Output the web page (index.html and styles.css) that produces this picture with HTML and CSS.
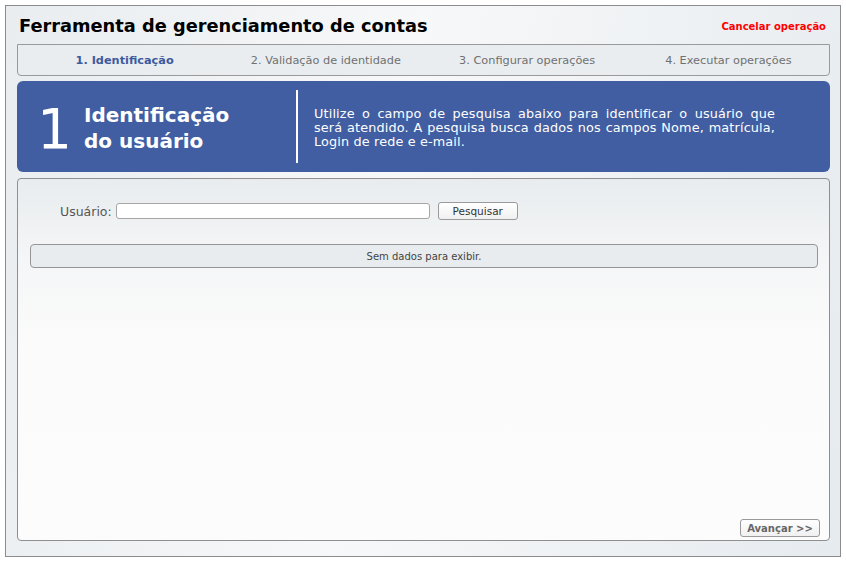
FILE: index.html
```html
<!DOCTYPE html>
<html lang="pt">
<head>
  <meta charset="UTF-8" />
  <title>Ferramenta de gerenciamento de contas</title>
  <link rel="stylesheet" href="styles.css">
</head>
<body>
  <div class="frame">
    <div class="header">
      <h1 class="title">Ferramenta de gerenciamento de contas</h1>
      <a class="cancel" href="#">Cancelar operação</a>
    </div>

    <div class="steps">
      <div class="step active">1. Identificação</div>
      <div class="step">2. Validação de identidade</div>
      <div class="step">3. Configurar operações</div>
      <div class="step">4. Executar operações</div>
    </div>

    <div class="banner">
      <div class="banner-num">1</div>
      <div class="banner-title">Identificação<br>do usuário</div>
      <div class="banner-sep"></div>
      <div class="banner-text">
        <span class="line">Utilize o campo de pesquisa abaixo para identificar o usuário que</span>
        <span class="line">será atendido. A pesquisa busca dados nos campos Nome, matrícula,</span>
        <span class="line last">Login de rede e e-mail.</span>
      </div>
    </div>

    <div class="panel">
      <div class="search">
        <label class="search-label" for="usuario">Usuário:</label>
        <input class="search-input" id="usuario" type="text">
        <button class="btn">Pesquisar</button>
      </div>
      <div class="empty">Sem dados para exibir.</div>
      <div class="panel-foot">
        <button class="btn btn-next">Avançar &gt;&gt;</button>
      </div>
    </div>
  </div>
</body>
</html>
```

FILE: styles.css
```css
html, body {
  margin: 0;
  background: #fff;
}

body {
  padding: 5px 6px 6px 5px;
  font-family: 'DejaVu Sans', Verdana, sans-serif;
}

.frame {
  box-sizing: border-box;
  width: 836px;
  height: 552px;
  border: 1px solid #8c8c8c;
  padding: 0 10px 15px 11px;
  display: flex;
  flex-direction: column;
  background: linear-gradient(100deg, #e9edf0 0%, #f7f8f9 45%, #e6ebef 100%);
}

.header {
  height: 38px;
  display: flex;
  align-items: center;
  justify-content: space-between;
  padding-left: 2px;
  padding-right: 4px;
}

.title {
  margin: 1px 0 0 0;
  font-size: 17.8px;
  font-weight: bold;
  color: #000;
}

.cancel {
  margin-top: 2px;
  color: #ff0000;
  font-size: 10px;
  font-weight: bold;
  text-decoration: none;
}

.steps {
  box-sizing: border-box;
  height: 32px;
  border: 1px solid #9a9a9a;
  border-radius: 0 0 4px 4px;
  background: #e9edf0;
  display: grid;
  grid-template-columns: repeat(4, 1fr);
  align-items: center;
  padding-left: 6px;
  padding-top: 1px;
}

.step {
  text-align: center;
  font-size: 11.3px;
  color: #707070;
}

.step.active {
  color: #3d5a9d;
  font-weight: bold;
}

.banner {
  margin-top: 5px;
  height: 91px;
  border-radius: 6px;
  background: #415ea2;
  color: #fff;
  display: flex;
  align-items: center;
}

.banner-num {
  width: 67px;
  padding-left: 20px;
  box-sizing: border-box;
  font-size: 55px;
  line-height: 1;
  margin-top: 6px;
}

.banner-title {
  width: 212px;
  font-size: 20px;
  font-weight: bold;
  line-height: 26px;
  margin-top: 2px;
}

.banner-sep {
  width: 2px;
  height: 73px;
  background: #fff;
}

.banner-text {
  width: 461px;
  margin-left: 16px;
  font-size: 12.8px;
  letter-spacing: 0.15px;
  line-height: 14px;
  margin-top: 2px;
}

.line {
  display: block;
  text-align: justify;
  text-align-last: justify;
  white-space: nowrap;
}

.line.last {
  text-align-last: left;
}

.panel {
  margin-top: 6px;
  flex: 1;
  box-sizing: border-box;
  border: 1px solid #8f8f8f;
  border-radius: 4px;
  background: linear-gradient(180deg, #e8ecee 0%, #f5f6f7 22%, #fbfbfb 45%, #fcfcfc 100%);
  display: flex;
  flex-direction: column;
  padding: 0 11px 3px 12px;
}

.search {
  display: flex;
  align-items: center;
  margin-top: 23px;
  padding-left: 30px;
}

.search-label {
  font-size: 12.5px;
  color: #555;
  margin-right: 4px;
}

.search-input {
  box-sizing: border-box;
  width: 314px;
  height: 16px;
  border: 1px solid #a6a6a6;
  border-radius: 3px;
  background: #fff;
  padding: 0;
  margin: 0 8px 0 0;
}

.btn {
  box-sizing: border-box;
  height: 18px;
  width: 80px;
  padding: 0;
  border: 1px solid #9a9a9a;
  border-radius: 3px;
  background: linear-gradient(#ffffff, #f0f0f0);
  font-family: 'DejaVu Sans', Verdana, sans-serif;
  font-size: 10.5px;
  color: #333;
}

.empty {
  margin-top: 24px;
  box-sizing: border-box;
  height: 24px;
  border: 1px solid #959595;
  border-radius: 4px;
  background: #e8ecee;
  font-size: 10px;
  color: #444;
  display: flex;
  align-items: center;
  justify-content: center;
}

.panel-foot {
  margin-top: auto;
  display: flex;
  justify-content: flex-end;
  margin-right: -2px;
}

.btn-next {
  width: 80px;
  font-weight: bold;
  color: #666;
  font-size: 10px;
}
```
